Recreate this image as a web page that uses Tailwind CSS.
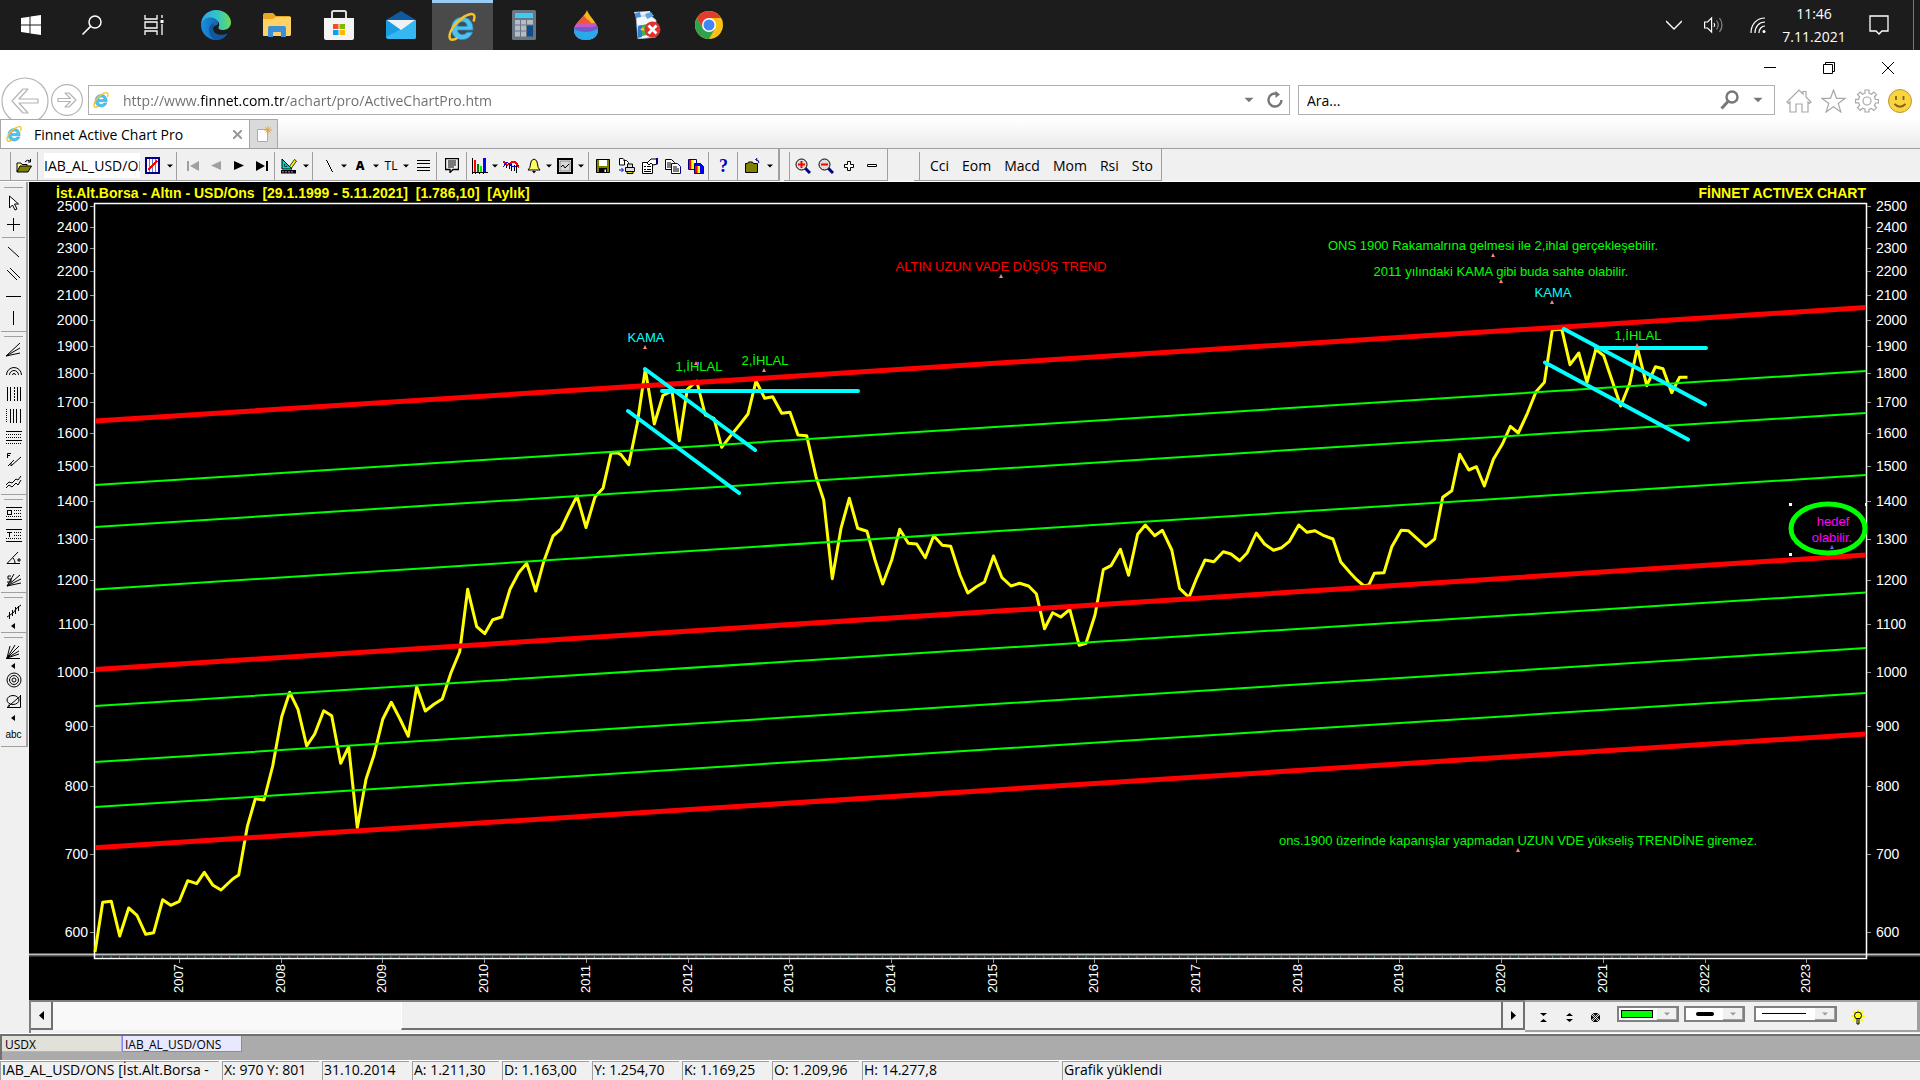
<!DOCTYPE html>
<html lang="tr">
<head>
    <meta charset="UTF-8">
    <meta name="viewport" content="width=device-width, initial-scale=1.0">
    <title>Finnet Active Chart Pro</title>
    <script src="https://cdn.jsdelivr.net/npm/@tailwindcss/browser@4"></script>
</head>
<body class="min-h-screen flex flex-col bg-[#f0f0f0] text-black font-['Open_Sans','Noto_Sans',sans-serif] overflow-hidden">

    <!-- Shared icons -->
    <svg class="hidden">
        <symbol id="ie" viewBox="0 0 32 32">
            <path d="M27 19H11.500c.3 3 2.300 4.600 5 4.600 2 0 3.600-.9 4.400-2.400h5.600C25 25.600 21.200 28.500 16.400 28.500 9.800 28.500 5.500 24 5.500 17.400 5.500 11 10 6.300 16.400 6.300 23.200 6.300 27.300 11.300 27 19zM11.600 15.300h9.600c-.2-2.800-2-4.600-4.700-4.600s-4.500 1.800-4.900 4.600z" fill="#4fc3f0" stroke="#1f8fd0" stroke-width=".7"/>
            <path d="M27.500 10.500C29.500 5.500 28.500 2.500 25 3 20 3.600 11 9.500 6.500 17 2.500 23.500 2.500 29 6.500 28.800c1.700 0 3.500-1 5-2" fill="none" stroke="#f6c32c" stroke-width="2.400"/>
        </symbol>
        <symbol id="caret" viewBox="0 0 6 4"><path d="M0 .5h6L3 3.500z"/></symbol>
        <symbol id="fly" viewBox="0 0 5 6"><path d="M4 0v6L0 3z"/></symbol>
    </svg>

    <!-- Taskbar -->
    <header class="h-[50px] flex items-stretch justify-between bg-[#1c1c1c] text-white">
        <nav class="grid grid-cols-12 w-[740px]">
            <button class="flex items-center justify-center" aria-label="Başlat">
                <svg class="w-5 h-5" viewBox="0 0 20 20" fill="#fff"><path d="M0 3l8.500-1.200v7.700H0zM9.500 1.600L20 0v9.500H9.500zM0 10.500h8.500v7.700L0 17zM9.500 10.500H20V20L9.500 18.400z"/></svg>
            </button>
            <button class="flex items-center justify-center" aria-label="Ara">
                <svg class="w-5 h-5" viewBox="0 0 20 20" fill="none" stroke="#fff" stroke-width="1.500"><circle cx="13" cy="7" r="6"/><path d="M8.600 11.400L.5 19.500"/></svg>
            </button>
            <button class="flex items-center justify-center" aria-label="Görev görünümü">
                <svg class="w-5 h-5" viewBox="0 0 20 20" fill="none" stroke="#fff" stroke-width="1.300"><path d="M1 0v4h12V0M1 20v-4h12v4M1 7h12v6H1zM18 0v3M18 9v11"/><path d="M16.500 5h3v3h-3z" fill="#fff" stroke="none"/></svg>
            </button>
            <button class="flex items-center justify-center" aria-label="Edge">
                <svg class="w-[30px] h-[30px]" viewBox="0 0 30 30">
                    <defs>
                        <linearGradient id="edgeTop" x1="0" x2="1"><stop offset="0" stop-color="#2aa7e8"/><stop offset=".6" stop-color="#37c7c0"/><stop offset="1" stop-color="#6fdc50"/></linearGradient>
                        <linearGradient id="edgeLow" x1="0" x2="1"><stop offset="0" stop-color="#1b8fdc"/><stop offset="1" stop-color="#0c4f9e"/></linearGradient>
                    </defs>
                    <path d="M0 15C0 6.500 6.500 0 15 0s15 6 15 12.500c0 4.500-3.500 7.500-8 7.500-3.500 0-5-1.500-4.500-2.800 1.500-2 1-7.200-4.500-7.200C7 10 0 12 0 15z" fill="url(#edgeTop)"/>
                    <path d="M0 15C1 9.500 6 7 10 7.500c5 .5 7.500 3.500 7 6.500-.2 1.500-6 1-5 6 .8 4 5 6 9 5.500 2-.2 4-1 5.500-2C24 28 20 30 15 30 6.500 30 0 23 0 15z" fill="url(#edgeLow)"/>
                    <path d="M10.500 14c-4 3.500-3.500 12 3.500 15.900 5 .3 9.500-2 12.500-6.400-7 3-14 .5-14.500-4.500-.2-2 .5-3.500 2-4.500-1-1.200-2.500-1.200-3.500-.5z" fill="#10589f"/>
                </svg>
            </button>
            <button class="flex items-center justify-center" aria-label="Dosya Gezgini">
                <svg class="w-7 h-6" viewBox="0 0 28 24"><path d="M0 2Q0 0 2 0h8l3 3h13q2 0 2 2v16q0 2-2 2H0z" fill="#e9a820"/><path d="M0 6h10l3-2h15v17q0 2-2 2H2q-2 0-2-2z" fill="#fdd367"/><path d="M5 24V15q0-2 2-2h14q2 0 2 2v9h-5v-4q0-1-1-1h-6q-1 0-1 1v4z" fill="#3a8fd6"/></svg>
            </button>
            <button class="flex items-center justify-center" aria-label="Mağaza">
                <svg class="w-[30px] h-[30px]" viewBox="0 0 30 30"><path d="M8 9V2.500Q8 1 9.500 1h11Q22 1 22 2.500V9" fill="none" stroke="#ddd" stroke-width="2"/><path d="M0 8h30v20q0 2-2 2H2q-2 0-2-2z" fill="#f4f4f4"/><path d="M9 14h5.500v5H9z" fill="#f25022"/><path d="M15.500 14H21v5h-5.500z" fill="#7fba00"/><path d="M9 20h5.500v5H9z" fill="#00a4ef"/><path d="M15.500 20H21v5h-5.500z" fill="#ffb900"/></svg>
            </button>
            <button class="flex items-center justify-center" aria-label="Posta">
                <svg class="w-[30px] h-7" viewBox="0 0 30 28"><path d="M0 9L15 0l15 9v6H0z" fill="#0f5a9e"/><path d="M0 9v17q0 2 2 2h26q2 0 2-2V9z" fill="#1b9de2"/><path d="M0 26L15 18l15-9v17q0 2-2 2H2z" fill="#35b8f1"/><path d="M1 9h28L15 19z" fill="#eef2f5"/></svg>
            </button>
            <button class="flex items-center justify-center bg-[#4a4a4a] border-t-[3px] border-[#99ccf5]" aria-label="Internet Explorer">
                <svg class="w-8 h-8"><use href="#ie"/></svg>
            </button>
            <button class="flex items-center justify-center" aria-label="Hesap Makinesi">
                <svg class="w-6 h-[30px]" viewBox="0 0 24 30"><rect width="24" height="30" rx="1.500" fill="#6b7683"/><path d="M3 3h18v5H3z" fill="#3ccbf4"/><path d="M3 10h5v4.500H3zM9 10h5v4.500H9zM15 10h6v4.500h-6zM3 15.500h5v5H3zM9 15.500h5v5H9zM3 21.500h5v5H3zM9 21.500h5v5H9z" fill="#b4bdc6"/><path d="M15 15.500h6v11h-6z" fill="#0e4d8c"/></svg>
            </button>
            <button class="flex items-center justify-center" aria-label="Paint 3D">
                <svg class="w-6 h-[30px]" viewBox="0 0 24 30"><defs><clipPath id="drop"><path d="M13 0c1 5 11 13 11 20 0 6-5 10-12 10S0 26 0 20C0 13 11 7 13 0z"/></clipPath></defs><g clip-path="url(#drop)"><path d="M0 0h24v30H0z" fill="#f8b81c"/><path d="M0 4h10c0 5 6 5 9 12L0 20z" fill="#f0543c"/><path d="M0 14c8-3 10 2 24-2v18H0z" fill="#c45ac0"/><path d="M0 18c9-3 14 2 24-3v15H0z" fill="#6e5bd0"/><path d="M0 19c8 4 15 4 24 0v11H0z" fill="#29a8ea"/></g></svg>
            </button>
            <button class="flex items-center justify-center" aria-label="Uygulama">
                <svg class="w-7 h-7" viewBox="0 0 28 28"><path d="M1 1l16-1 1 6-14 2z" fill="#e8f1fa"/><path d="M3 5h15l5 4v17L5 28z" fill="#f4f7fb" stroke="#9fb6cc" stroke-width=".8"/><path d="M2 2l5-1 1 5-5 1z" fill="#4a90d9"/><path d="M12 3l6-2 3 4-7 3z" fill="#5ea4e4"/><path d="M5 15l9-2v11l-9 2z" fill="#39b54a"/><path d="M5 15l4-1v12l-4 1z" fill="#2b7bd0"/><path d="M7 19l3-3 2 4z" fill="#f6c32c"/><circle cx="19.500" cy="18.500" r="8" fill="#e03030"/><path d="M15.500 14.500l8 8m0-8l-8 8" stroke="#fff" stroke-width="2.800"/></svg>
            </button>
            <button class="flex items-center justify-center" aria-label="Chrome">
                <svg class="w-7 h-7" viewBox="0 0 28 28"><circle cx="14" cy="14" r="14" fill="#fbc116"/><path d="M14 7h12.100A14 14 0 0 0 1.900 7L8 17.500z" fill="#e33b2e"/><path d="M1.900 7A14 14 0 0 0 14 28l6-10.500L14 20l-6-2.500z" fill="#2fa24c"/><circle cx="14" cy="14" r="7" fill="#fff"/><circle cx="14" cy="14" r="5.500" fill="#4285f4"/></svg>
            </button>
        </nav>
        <div class="flex items-center">
            <button class="w-10 flex justify-center" aria-label="Gizli simgeler"><svg class="w-4 h-4" viewBox="0 0 16 16" fill="none" stroke="#fff" stroke-width="1.400"><path d="M0 4l8 8 8-8"/></svg></button>
            <button class="w-10 flex justify-center" aria-label="Ses"><svg class="w-5 h-5" viewBox="0 0 20 20" fill="none" stroke="#fff" stroke-width="1.200"><path d="M.6 7h3l4-4v14l-4-4h-3zM10 8q1.500 2 0 4"/><path d="M12.500 5.500q3.500 4.500 0 9M15.500 3q5 7 0 14" stroke="#888"/></svg></button>
            <button class="w-10 flex justify-end pr-2" aria-label="Ağ"><svg class="w-4 h-4" viewBox="0 0 16 16" fill="none" stroke="#fff" stroke-width="1.200"><path d="M1 16C1 7 7 1 15 1M5 16C5 9.500 9 5 15 5M9 16c0-4 2.500-7 6-7"/><circle cx="14" cy="14.500" r="1.500" fill="#fff" stroke="none"/></svg></button>
            <button class="w-20 text-center text-sm leading-[23px]"><time>11:46<br>7.11.2021</time></button>
            <button class="w-[50px] flex justify-center" aria-label="Bildirimler"><svg class="w-5 h-5" viewBox="0 0 20 20" fill="none" stroke="#fff" stroke-width="1.300"><path d="M1 1h18v15h-6l-3 3-3-3H1z"/></svg></button>
            <span class="w-[10px] h-[50px] border-r border-[#777] mr-[6px]"></span>
        </div>
    </header>

    <!-- Window title bar -->
    <div class="h-[35px] flex justify-end items-center bg-white">
        <button class="w-[59px] flex justify-center" aria-label="Simge durumuna küçült"><svg class="w-3 h-3" viewBox="0 0 12 12"><path d="M0 5h12v1H0z"/></svg></button>
        <button class="w-[59px] flex justify-center" aria-label="Önceki boyut"><svg class="w-3 h-3" viewBox="0 0 12 12" fill="none" stroke="#000"><path d="M.5 2.500h9v9h-9zM2.500 2V.5h9v9H10"/></svg></button>
        <button class="w-[59px] flex justify-center mr-[3px]" aria-label="Kapat"><svg class="w-3 h-3" viewBox="0 0 12 12" fill="none" stroke="#000"><path d="M0 0l12 12M12 0L0 12"/></svg></button>
    </div>

    <!-- Address row -->
    <div class="h-[34px] flex items-start bg-white pr-2">
        <button class="w-[49px] shrink-0 -mt-2 flex justify-center" aria-label="Geri">
            <svg class="w-12 h-12 shrink-0" viewBox="0 0 48 48" fill="none" stroke="#b4b4b4" stroke-width="1.200"><circle cx="24" cy="24" r="23"/><path d="M11 24L22 12h5l-9 10h19v4H18l9 10h-5z" stroke-linejoin="round"/></svg>
        </button>
        <button class="w-9 shrink-0 flex justify-center" aria-label="İleri">
            <svg class="w-8 h-8 -mt-px" viewBox="0 0 32 32" fill="none" stroke="#b4b4b4" stroke-width="1.200"><circle cx="16" cy="16" r="15.400"/><path d="M25 16l-7-7h-4l5.500 5.500H7v3h12.500L14 23h4z" stroke-linejoin="round"/></svg>
        </button>
        <div class="h-[30px] flex-1 ml-[3px] flex items-center border border-[#b0b0b0] pl-[3px]">
            <svg class="w-[18px] h-[18px]"><use href="#ie"/></svg>
            <input type="text" aria-label="Adres" value="http://www.finnet.com.tr/achart/pro/ActiveChartPro.htm" class="flex-1 ml-[13px] pt-[2px] text-sm outline-none text-transparent bg-clip-text bg-[linear-gradient(90deg,#6d6d6d_78px,#000_78px,#000_161px,#6d6d6d_161px)]">
            <button class="w-6 flex justify-center" aria-label="Adres geçmişi"><svg class="w-[10px] h-[6px]" fill="#777"><use href="#caret"/></svg></button>
            <button class="w-7 flex justify-center" aria-label="Yenile"><svg class="w-[18px] h-[18px]" viewBox="0 0 18 18" fill="none" stroke="#777" stroke-width="2.400"><path d="M15.500 9a6.500 6.500 0 1 1-4-6"/><path d="M9.500 0L14 3.500 9.500 7z" fill="#777" stroke="none"/></svg></button>
        </div>
        <div class="h-[30px] w-[477px] ml-2 flex items-center border border-[#b0b0b0] pl-2">
            <input type="text" aria-label="Arama" placeholder="Ara..." class="flex-1 pt-[2px] text-sm outline-none placeholder:text-black">
            <button class="w-6 flex justify-center" aria-label="Ara"><svg class="w-5 h-5" viewBox="0 0 20 20" fill="none" stroke="#777"><circle cx="12" cy="7" r="5.500" stroke-width="2.400"/><path d="M8 11.500L1.500 18.500" stroke-width="3"/></svg></button>
            <button class="w-8 flex justify-center" aria-label="Arama seçenekleri"><svg class="w-[10px] h-[6px]" fill="#777"><use href="#caret"/></svg></button>
        </div>
        <div class="flex items-center h-8 ml-[11px] gap-[9px]">
            <button aria-label="Giriş"><svg class="block w-[26px] h-6" viewBox="0 0 26 24" fill="none" stroke="#a8a8a8" stroke-width="1.200"><path d="M1 13L13 1l4 4V2.500h3V8l5 5-1.500 1.500L22 13v10h-6v-8h-6v8H4V13l-1.500 1.500z"/></svg></button>
            <button aria-label="Sık kullanılanlar"><svg class="block w-[25px] h-6" viewBox="0 0 25 24" fill="none" stroke="#a8a8a8" stroke-width="1.200"><path d="M12.500 1l3 8.300h8.700l-7 5.200 2.700 8.500-7.400-5.200L5.100 23l2.700-8.500-7-5.200h8.700z"/></svg></button>
            <button aria-label="Araçlar"><svg class="block w-6 h-6" viewBox="0 0 24 24" fill="none" stroke="#a8a8a8" stroke-width="1.200"><path d="M10 1h4v3.200l2.500 1 2.300-2.200 2.700 2.700-2.100 2.300 1 2.500H23.400v3.500h-3l-1 2.500 2.100 2.300-2.700 2.700-2.300-2.100-2.500 1V23h-4v-2.800l-2.500-1-2.300 2.100-2.700-2.700 2.100-2.300-1-2.500H.6v-3.500h3l1-2.500-2.100-2.300L5.200 3l2.300 2.200 2.500-1z"/><circle cx="12" cy="12" r="4"/></svg></button>
            <button aria-label="Geri bildirim"><svg class="block w-6 h-6" viewBox="0 0 24 24"><circle cx="12" cy="12" r="11.500" fill="#fbd33c" stroke="#b59a3a"/><path d="M8 7v4M15.500 7v4M6.500 15q5.500 5.500 11 0" fill="none" stroke="#7a6420" stroke-width="1.800"/></svg></button>
        </div>
    </div>

    <!-- Tabs -->
    <div class="h-[30px] flex items-stretch bg-linear-to-b from-white to-[#ebebeb] border-b border-[#a0a0a0]">
        <div class="w-[250px] flex items-center bg-white border border-b-0 border-[#a8a8a8] pl-1">
            <svg class="w-[18px] h-[18px]"><use href="#ie"/></svg>
            <a href="#" class="flex-1 ml-[11px] pt-px text-sm">Finnet Active Chart Pro</a>
            <button class="w-6 flex justify-center" aria-label="Sekmeyi kapat"><svg class="w-[9px] h-[9px]" viewBox="0 0 9 9" stroke="#999" stroke-width="2"><path d="M0 0l9 9M9 0L0 9"/></svg></button>
        </div>
        <button class="w-7 flex items-center justify-center bg-[#dadada] border-t border-r border-[#a8a8a8]" aria-label="Yeni sekme">
            <svg class="w-4 h-4" viewBox="0 0 16 16"><path d="M1.500 3.500h10v12h-10z" fill="#fff" stroke="#aaa"/><path d="M12 0v8M8 4h8M9.500 1.500l5 5M14.500 1.500l-5 5" stroke="#e8a33a"/></svg>
        </button>
    </div>

    <!-- Chart toolbar -->
    <div class="h-[33px] flex items-stretch border-b border-white text-sm">
        <div class="flex items-center border-r-2 border-b border-[#a0a0a0] pl-[10px] pr-[3px] pt-[2px]">
            <span class="w-[2px] h-7 border-l border-[#a0a0a0]"></span>
            <button class="w-6 flex justify-center" aria-label="Aç"><svg class="w-4 h-[14px]" viewBox="0 0 16 14"><path d="M1 13V4h4l1 1.500h5V8" fill="#ffff9c" stroke="#000"/><path d="M1 13l3-6h11.500l-3.500 6z" fill="#808000" stroke="#000"/><path d="M9 3q2-3 5-1M14.500 0v3H12" fill="none" stroke="#000"/></svg></button>
            <span class="w-[2px] h-7 mx-px border-l border-[#a0a0a0]"></span>
            <input type="text" aria-label="Sembol" value="IAB_AL_USD/ONS" class="w-24 h-[25px] ml-1 bg-white outline-none text-sm">
            <button class="w-[25px] flex justify-center" aria-label="Grafik türü"><svg class="w-[15px] h-[17px]" viewBox="0 0 15 17" shape-rendering="crispEdges"><path d="M1 1h13v15H1z" fill="#fff" stroke="#00008b" stroke-width="2"/><path d="M4.500 2v13M7.500 2v13M10.500 2v13" stroke="#5a7de0"/><path d="M3 13l4-4 5-5" stroke="red" stroke-width="2" fill="none"/></svg></button>
            <button class="w-[10px] flex justify-center" aria-label="Grafik türü listesi"><svg class="w-[6px] h-1"><use href="#caret"/></svg></button>
            <span class="w-[2px] h-7 mx-px border-l border-[#a0a0a0]"></span>
            <button class="w-[23px] ml-[2px] flex justify-center" aria-label="İlk"><svg class="w-3 h-[10px]" viewBox="0 0 12 10" fill="#a0a0a0"><path d="M0 0h2v10H0zM12 0v10L3 5z"/></svg></button>
            <button class="w-[23px] flex justify-center" aria-label="Önceki"><svg class="w-[10px] h-[9px]" viewBox="0 0 10 9" fill="#a0a0a0"><path d="M10 0v9L0 4.500z"/></svg></button>
            <button class="w-[23px] flex justify-center" aria-label="Sonraki"><svg class="w-[10px] h-[9px]" viewBox="0 0 10 9"><path d="M0 0v9l10-4.500z"/></svg></button>
            <button class="w-[23px] flex justify-center" aria-label="Son"><svg class="w-3 h-[10px]" viewBox="0 0 12 10"><path d="M10 0h2v10h-2zM0 0v10l9-5z"/></svg></button>
            <span class="w-[2px] h-7 mx-px border-l border-[#a0a0a0]"></span>
            <button class="w-6 flex justify-center" aria-label="Çizim"><svg class="w-4 h-4" viewBox="0 0 16 16"><path d="M1 1v10h10z" fill="#00d8d8" stroke="#000"/><path d="M3.500 6v2.500H6z" fill="#fff" stroke="#000" stroke-width=".7"/><path d="M0 12h15v3.500H0z"/><path d="M2 13v1.500M5 13v1.500M8 13v1.500M11 13v1.500" stroke="#ccc"/><path d="M8.500 8.500l5-7 2 1.500-5 7z" fill="#ff0" stroke="#000" stroke-width=".8"/></svg></button>
            <button class="w-[10px] flex justify-center" aria-label="Çizim listesi"><svg class="w-[6px] h-1"><use href="#caret"/></svg></button>
            <span class="w-[2px] h-7 mx-px border-l border-[#a0a0a0]"></span>
            <button class="w-6 pl-1 flex justify-center" aria-label="Çizgi"><svg class="w-[7px] h-3" viewBox="0 0 7 12" stroke="#000" shape-rendering="crispEdges"><path d="M.5 0l6 12"/></svg></button>
            <button class="w-[10px] flex justify-center" aria-label="Çizgi listesi"><svg class="w-[6px] h-1"><use href="#caret"/></svg></button>
            <button class="w-[22px] text-xs font-extrabold">A</button>
            <button class="w-[10px] flex justify-center" aria-label="Yazı listesi"><svg class="w-[6px] h-1"><use href="#caret"/></svg></button>
            <button class="w-5 text-xs">TL</button>
            <button class="w-[10px] flex justify-center" aria-label="Para birimi listesi"><svg class="w-[6px] h-1"><use href="#caret"/></svg></button>
            <button class="w-6 flex justify-center" aria-label="Seviyeler"><svg class="w-[13px] h-[11px]" viewBox="0 0 13 11" stroke="#000" shape-rendering="crispEdges"><path d="M0 .5h13M0 3.500h13M0 7.500h13M0 10.500h13"/></svg></button>
            <span class="w-[2px] h-7 mx-px border-l border-[#a0a0a0]"></span>
            <button class="w-[26px] flex justify-center" aria-label="Not"><svg class="w-[14px] h-[15px]" viewBox="0 0 14 15" fill="none" stroke="#000"><path d="M.5.5h13v11H8L5 14.500v-3H.5z" stroke-width="1.300"/><path d="M3 3h8M3 5h8M3 7h8M3 9h6"/></svg></button>
            <span class="w-[2px] h-7 mx-px border-l border-[#a0a0a0]"></span>
            <button class="w-[22px] flex justify-center" aria-label="Göstergeler"><svg class="w-4 h-4" viewBox="0 0 16 16" shape-rendering="crispEdges"><path d="M.5 0v15.500M0 14.500h16M3.500 14v2M7.500 14v2M11.500 14v2" stroke="#000"/><path d="M2 2h2v12H2z" fill="red"/><path d="M5 6h2v8H5z" fill="#008000"/><path d="M8 8h2v6H8z" fill="#0e0"/><path d="M11 0h3v14h-3z" fill="#00f"/></svg></button>
            <button class="w-2 flex justify-center" aria-label="Gösterge listesi"><svg class="w-[6px] h-1"><use href="#caret"/></svg></button>
            <button class="w-6 flex justify-center" aria-label="Karşılaştır"><svg class="w-4 h-[14px]" viewBox="0 0 16 14" fill="none" shape-rendering="crispEdges"><path d="M1.500 2v5M3.500 3v6M6.500 5v5M8.500 3v9M11.500 6v6M13.500 6v8" stroke="#000"/><path d="M0 2q4 6 8 2t8 5" stroke="red" stroke-width="2"/><path d="M0 8l4-5 6 5 6-2" stroke="#00f"/></svg></button>
            <button class="w-[22px] flex justify-center" aria-label="Alarm"><svg class="w-[14px] h-4" viewBox="0 0 14 16"><path d="M7 1q3.500 1 3.500 5t2.500 6H1q2.500-2 2.500-6T7 1z" fill="#ffff60" stroke="#000"/><path d="M5 13h4l-2 2.500z"/></svg></button>
            <button class="w-2 flex justify-center" aria-label="Alarm listesi"><svg class="w-[6px] h-1"><use href="#caret"/></svg></button>
            <button class="w-6 flex justify-center" aria-label="Şablon"><svg class="w-4 h-4" viewBox="0 0 16 16" fill="none" stroke="#000"><path d="M1 1h14v14H1z" stroke-width="2"/><path d="M3 3h10v10H3z" fill="#d8d8d8" stroke="#888"/><path d="M4 9l2-2 2 3 4-4"/></svg></button>
            <button class="w-2 mr-[2px] flex justify-center" aria-label="Şablon listesi"><svg class="w-[6px] h-1"><use href="#caret"/></svg></button>
            <span class="w-[2px] h-7 mx-px border-l border-[#a0a0a0]"></span>
            <button class="w-6 flex justify-center" aria-label="Kaydet"><svg class="w-[14px] h-[14px]" viewBox="0 0 14 14"><path d="M.5.5h13v13H.5z" fill="#808000" stroke="#000"/><path d="M3 1h8v6H3z" fill="#fff"/><path d="M3 9h8v5H3z"/><path d="M8.500 10.500h1.500V13H8.500z" fill="#fff"/></svg></button>
            <button class="w-[23px] flex justify-center" aria-label="Yazdır"><svg class="w-4 h-4" viewBox="0 0 16 16" fill="#fff" stroke="#000"><path d="M.5.500h3.500l1.500 1.500v5h-5zM4.500 2.500h3l2 2v3"/><path d="M8.500 9V6h5v3M6.500 9.500h9v4h-9z" fill="#ddd"/><path d="M8 13.500h6v2H8z" fill="#dd0"/><path d="M0 12h4M2.500 10l2 2-2 2" fill="none" stroke="#00c"/></svg></button>
            <button class="w-[23px] flex justify-center" aria-label="Özellikler"><svg class="w-4 h-4" viewBox="0 0 16 16" fill="#fff" stroke="#000"><path d="M.5 4.500h10v11H.5z"/><path d="M2 8.500h2M5 8.500h4M2 11.500h2M5 11.500h4M2 13.500h7"/><path d="M5 5l4-4h5l1.500 2v3L11 7 9 5 7 7z"/><path d="M15 0v6" stroke="#00008b" stroke-width="2"/></svg></button>
            <button class="w-[23px] flex justify-center" aria-label="Kopyala"><svg class="w-4 h-4" viewBox="0 0 16 16" fill="#fff" stroke="#000"><path d="M.5 1.500h6l3 3v7h-9z"/><path d="M2 5h4M2 7h4M2 9h4"/><path d="M6.500 5.500h6l3 3v7h-9z" stroke="#000080"/><path d="M8 9h4M8 11h6M8 13h6"/></svg></button>
            <button class="w-[23px] flex justify-center" aria-label="Renkli kopyala"><svg class="w-4 h-4" viewBox="0 0 16 16" stroke="#000080"><path d="M.5 1.500h8v10h-8z" fill="#fff"/><path d="M1 2h2.500v9H1z" fill="red" stroke="none"/><path d="M3.500 2H6v9H3.500z" fill="#ff0" stroke="none"/><path d="M6.500 5.500h6l3 3v7h-9z" fill="#00f"/><path d="M7 8h2.500v7H7z" fill="red" stroke="none"/><path d="M9.500 8H12v7H9.500z" fill="#ff0" stroke="none"/></svg></button>
            <span class="w-[2px] h-7 mx-px border-l border-[#a0a0a0]"></span>
            <button class="w-[25px] text-lg leading-none font-bold text-[#0000b8] font-['Liberation_Serif',serif]" aria-label="Yardım">?</button>
            <span class="w-[2px] h-7 mx-px border-l border-[#a0a0a0]"></span>
            <button class="w-[25px] flex justify-center" aria-label="Klasör"><svg class="w-[15px] h-[15px]" viewBox="0 0 15 15"><path d="M.5 14.500v-9h2l1-1.500h4l1 1.500h4v9z" fill="#808000" stroke="#000"/><path d="M14 5q0-3-3-3.500M12.500 0l-2 1.500 2 1.500" fill="none" stroke="#00008b"/></svg></button>
            <button class="w-[10px] flex justify-center" aria-label="Klasör listesi"><svg class="w-[6px] h-1"><use href="#caret"/></svg></button>
        </div>
        <div class="ml-1 flex items-center border-r border-b border-[#a0a0a0] pl-[5px] pr-1 pt-[2px]">
            <span class="w-[2px] h-7 border-l border-[#a0a0a0]"></span>
            <button class="w-[23px] flex justify-center" aria-label="Yakınlaştır"><svg class="w-4 h-4" viewBox="0 0 16 16"><path d="M10 10l5 5" stroke="#00008b" stroke-width="3"/><circle cx="6.500" cy="6.500" r="5.500" fill="#ddd" stroke="#000"/><path d="M3 6.500h7M6.500 3v7" stroke="red" stroke-width="2"/></svg></button>
            <button class="w-[23px] flex justify-center" aria-label="Uzaklaştır"><svg class="w-4 h-4" viewBox="0 0 16 16"><path d="M10 10l5 5" stroke="#00008b" stroke-width="3"/><circle cx="6.500" cy="6.500" r="5.500" fill="#ddd" stroke="#000"/><path d="M3 6.500h7" stroke="red" stroke-width="2"/></svg></button>
            <button class="w-[23px] flex justify-center" aria-label="Artır"><svg class="w-[10px] h-[10px]" viewBox="0 0 10 10" fill="#fff" stroke="#000"><path d="M3.500.5h3v3h3v3h-3v3h-3v-3h-3v-3h3z"/></svg></button>
            <button class="w-[23px] flex justify-center" aria-label="Azalt"><svg class="w-[10px] h-[3px]" viewBox="0 0 10 3" fill="#fff" stroke="#000"><path d="M.5.5h9v2h-9z"/></svg></button>
        </div>
        <div class="ml-[26px] flex items-center border-r border-b border-[#a0a0a0] pl-[5px] pr-2 pt-[2px] gap-[13px]">
            <span class="w-[2px] h-7 -mr-1 border-l border-[#a0a0a0]"></span>
            <button>Cci</button>
            <button>Eom</button>
            <button>Macd</button>
            <button>Mom</button>
            <button>Rsi</button>
            <button>Sto</button>
        </div>
    </div>

    <main class="flex items-stretch">
        <!-- Drawing tools -->
        <aside class="w-[29px] shrink-0 pl-px">
            <div class="w-[27px] h-[150px] flex flex-col items-center border-b border-r-2 border-[#a0a0a0]">
                <div class="w-full h-[10px] px-[3px] pt-[5px]"><hr class="border-[#a0a0a0]"></div>
                <button class="h-[22px]" aria-label="Seç"><svg class="w-4 h-4" viewBox="0 0 16 16" fill="#fff" stroke="#000"><path d="M3.500 1v12l3-3 2.500 5 2-1-2.500-5h4z"/></svg></button>
                <button class="h-[22px]" aria-label="Artı imleç"><svg class="w-4 h-4" viewBox="0 0 16 16" stroke="#000" shape-rendering="crispEdges"><path d="M1 7.500h13M7.500 1v13"/></svg></button>
                <div class="w-full h-[5px] px-px pt-[1px]"><hr class="border-[#a0a0a0]"></div>
                <button class="h-[22px]" aria-label="Trend çizgisi"><svg class="w-4 h-4" viewBox="0 0 16 16" stroke="#000"><path d="M2 3l11 10"/></svg></button>
                <button class="h-[22px]" aria-label="Paralel çizgi"><svg class="w-4 h-4" viewBox="0 0 16 16" stroke="#000"><path d="M1 4l10 10M4 2l10 10"/></svg></button>
                <button class="h-[22px]" aria-label="Yatay çizgi"><svg class="w-4 h-4" viewBox="0 0 16 16" stroke="#000" shape-rendering="crispEdges"><path d="M0 8.500h15"/></svg></button>
                <button class="h-[22px]" aria-label="Dikey çizgi"><svg class="w-4 h-4" viewBox="0 0 16 16" stroke="#000" shape-rendering="crispEdges"><path d="M7.500 1v14"/></svg></button>
            </div>
            <div class="w-[27px] h-[163px] flex flex-col items-center border-b border-r-2 border-[#a0a0a0]">
                <div class="w-full h-[7px] px-[3px] pt-[4px]"><hr class="border-[#a0a0a0]"></div>
                <button class="h-[22px]" aria-label="Fan"><svg class="w-4 h-4" viewBox="0 0 16 16" stroke="#000"><path d="M0 14L14 1M0 14L14 6M0 14l14-3"/></svg></button>
                <button class="h-[22px]" aria-label="Yaylar"><svg class="w-4 h-4" viewBox="0 0 16 16" fill="none" stroke="#000"><path d="M.5 11a7.500 7.500 0 0 1 15 0M3.500 11a4.500 4.500 0 0 1 9 0M6.500 11a1.500 1.500 0 0 1 3 0"/></svg></button>
                <button class="h-[22px]" aria-label="Döngü"><svg class="w-4 h-4" viewBox="0 0 16 16" stroke="#000" shape-rendering="crispEdges"><path d="M1.500 1v14M4.500 1v14M11.500 1v14M14.500 1v14"/><path d="M8.500 1v14" stroke-dasharray="2 1"/></svg></button>
                <button class="h-[22px]" aria-label="Zaman bölgeleri"><svg class="w-4 h-4" viewBox="0 0 16 16" stroke="#000" shape-rendering="crispEdges"><path d="M.5 1v14" stroke-dasharray="1 1"/><path d="M4.500 1v14M7.500 1v14M10.500 1v14M14.500 1v14"/></svg></button>
                <button class="h-[22px]" aria-label="Geri çekilme"><svg class="w-4 h-4" viewBox="0 0 16 16" stroke="#000" shape-rendering="crispEdges"><path d="M0 1.500h16M0 10.500h16"/><path d="M0 4.500h16M0 7.500h16M0 13.500h16" stroke-dasharray="1 1"/></svg></button>
                <button class="h-[22px]" aria-label="Fibonacci"><svg class="w-4 h-4" viewBox="0 0 16 16" fill="none" stroke="#000"><path d="M1.500 6V1.500H5M1.500 3.500H4M2 14l6-6M5 14l10-9M5 14v-3"/></svg></button>
                <button class="h-[22px]" aria-label="Regresyon"><svg class="w-4 h-4" viewBox="0 0 16 16" fill="none" stroke="#000"><path d="M0 11l3-3 3 1 4-4 2 1 3-4M0 14l3-3 3 2 4-4 2 2 3-5"/></svg></button>
            </div>
            <div class="w-[27px] h-[98px] flex flex-col items-center border-b border-r-2 border-[#a0a0a0]">
                <div class="w-full h-[8px] px-[3px] pt-[4px]"><hr class="border-[#a0a0a0]"></div>
                <button class="h-[22px]" aria-label="Quadrant"><svg class="w-4 h-4" viewBox="0 0 16 16" fill="none" stroke="#000" shape-rendering="crispEdges"><path d="M0 1.500h16M0 13.500h16M1.500 4.500h4v4h-4zM5 8l1 1"/><path d="M8 4.500h8M8 7.500h8M0 10.500h16" stroke-dasharray="1 1"/></svg></button>
                <button class="h-[22px]" aria-label="Tirone"><svg class="w-4 h-4" viewBox="0 0 16 16" fill="none" stroke="#000" shape-rendering="crispEdges"><path d="M0 1.500h16M0 13.500h16M1 4.500h5M3.500 4v5"/><path d="M8 4.500h8M8 7.500h8M0 10.500h16" stroke-dasharray="1 1"/></svg></button>
                <button class="h-[22px]" aria-label="Açı"><svg class="w-4 h-4" viewBox="0 0 16 16" fill="none" stroke="#000"><path d="M12 2L1 13.500h13M7 8q2 2 2 5"/><path d="M12 9h2v2h-2z"/></svg></button>
                <button class="h-[22px]" aria-label="Gann"><svg class="w-4 h-4" viewBox="0 0 16 16" fill="none" stroke="#000"><path d="M1 14L8 2M1 14L14 3M1 14l14-7M1 14l14-3M5 4H2v3h3v3H1"/></svg></button>
            </div>
            <div class="w-[27px] h-10 flex flex-col items-center border-b border-r-2 border-[#a0a0a0]">
                <div class="w-full h-[8px] px-[3px] pt-[4px]"><hr class="border-[#a0a0a0]"></div>
                <button class="h-[22px]" aria-label="Kanal"><svg class="w-4 h-4" viewBox="0 0 16 16" fill="none" stroke="#000"><path d="M1 13l3-2 3-2 4-5 4-3M3.500 8v7M6.500 6v6M9.500 3v7M12.500 2v5"/></svg></button>
                <svg class="w-[5px] h-[6px]"><use href="#fly"/></svg>
            </div>
            <div class="w-[27px] h-[114px] flex flex-col items-center border-b border-r-2 border-[#a0a0a0]">
                <div class="w-full h-[8px] px-[3px] pt-[4px]"><hr class="border-[#a0a0a0]"></div>
                <button class="h-[22px]" aria-label="Hız çizgileri"><svg class="w-4 h-4" viewBox="0 0 16 16" fill="none" stroke="#000"><path d="M0 14.500h14M1 14L4 2M1 14L9 1M1 14L13 2M1 14l12-7M1 14l12-4"/></svg></button>
                <svg class="w-[5px] h-[6px]"><use href="#fly"/></svg>
                <button class="h-[22px]" aria-label="Spiral"><svg class="w-4 h-4" viewBox="0 0 16 16" fill="none" stroke="#000"><circle cx="8" cy="8" r="7"/><circle cx="8" cy="8" r="4.500"/><circle cx="8" cy="8" r="2"/></svg></button>
                <button class="h-[22px]" aria-label="Şekiller"><svg class="w-4 h-4" viewBox="0 0 16 16" fill="none" stroke="#000"><path d="M14.500 1v12.500H1L14.500 2M3 13.500v-3"/><ellipse cx="7" cy="6" rx="6" ry="4.500"/></svg></button>
                <svg class="w-[5px] h-[6px] mt-[2px]"><use href="#fly"/></svg>
                <button class="h-[22px] mt-[2px] text-[10px] font-['Liberation_Sans',sans-serif]">abc</button>
            </div>
        </aside>

        <!-- Chart -->
        <svg class="block flex-1 min-w-0 bg-black font-['Liberation_Sans',sans-serif]" viewBox="29 182 1891 818">
            <g class="text-sm font-bold" fill="#ff0">
                <text x="56" y="198" xml:space="preserve">İst.Alt.Borsa - Altın - USD/Ons  [29.1.1999 - 5.11.2021]  [1.786,10]  [Aylık]</text>
                <text x="1866" y="198" text-anchor="end">FİNNET ACTIVEX CHART</text>
            </g>
            <path d="M29 954.500H1920" stroke="#c0c0c0" stroke-width="2"/>
            <path d="M29 956H1920" stroke="#606060"/>
            <path d="M94.500 958.500V203.500H1866.500V958.500z" fill="none" stroke="#fff" stroke-width="1.500"/>
            <path d="M102 957H1690" stroke="#5ff" stroke-width="1" stroke-dasharray="1 7.480"/>
            <g id="axes" class="text-sm" fill="#fff"></g>

            <!-- Monthly close -->
            <polyline fill="none" stroke="#ff0" stroke-width="3" stroke-linejoin="round" points="95,952 102.700,902.300 111.300,901.300 119.700,936 128.700,908 137,915.300 145.700,934.300 153.700,932.700 162.700,899.700 170.700,905.300 179.300,901.300 187.700,880.700 196.700,883.700 204.300,872.300 213,885.300 221,890 232.700,879 238.700,875 247.300,826.700 255.300,798.700 264,800 272.700,766 281.700,716.700 289.700,692.300 298,709.300 306.700,746 314.700,734 323.700,710.700 331.700,715.700 340.700,763.300 348.700,746.700 357.300,827.700 366,779.300 374,755 382.700,719.300 391.300,702.300 400,719 408.300,736.300 416.700,686.700 425.300,711 434,704.300 442.300,699 451,672.700 459.700,651.700 467.700,589.300 476.700,626.700 484.700,633.700 492.700,619.700 501.700,617 510,589.300 518.700,572.700 526.700,563.300 535.700,591 543.700,561.700 553,536 561,529 569,512 577,496 586,527.500 595,497 603,488.300 611,453.300 617,452.700 621,454.700 628.700,464.700 637.300,423.300 645.300,369.300 654.300,424 663,395.300 672,391 679.300,440.700 687.300,389.300 696.700,381 705.300,415 714,418.300 721.700,447.300 730,436.700 740,424.300 748,414 756,381 764.700,398.300 772.700,396.700 781.700,413.300 790,412.300 798,435 806.700,435.700 816,476.700 823.700,500 832.300,578.700 841,528.300 849.300,498.300 857.700,528.300 867,531.300 875,560 882.700,584 891.700,560 899.700,529.300 908.300,543.300 916.700,544 925.300,557.700 933.700,535.700 942.300,545.300 950.700,546.300 960,575 967.800,593 976.300,586.700 984.500,582 993.500,556 1002,577.700 1011,586 1019.600,583.300 1028.600,586 1036.300,593.700 1044.500,628.700 1052.700,612.700 1060.800,617 1069.800,609.300 1079.200,645.300 1086,643.300 1095,615 1103.300,569.700 1111,565.700 1120.400,549.300 1128.600,575.300 1137.600,534.300 1145.300,525 1154.700,535.700 1162.400,530.300 1171.800,550 1179.600,588.300 1189,597.300 1197,577.300 1205,560 1213.900,561.700 1223.300,551.700 1231,554 1239.600,560.700 1247.300,552.700 1256.300,533 1264.500,544 1273.500,550.300 1281.600,547.700 1289.400,541.300 1298.800,525 1307,532.300 1315,530.700 1324,535.700 1333,539 1340.800,562 1350.600,573.300 1356.700,579.700 1364,586 1369,584.700 1374.300,573.300 1384,572.700 1391.800,546.700 1401.200,530.300 1408.200,530.700 1425.700,546.300 1434.700,539 1442.700,497.300 1451.800,490.700 1459.700,454.300 1468.800,470 1476.400,466.700 1484.300,486 1493.400,459.300 1502.400,444 1510.400,426.300 1518.300,433 1527.400,413.300 1536,391.700 1544.400,382.300 1552.300,330 1561.800,329.300 1570,364.700 1578.800,353 1587,382.300 1595.800,349.300 1603.700,355.700 1620.700,406 1629.800,383.300 1637.300,347.700 1646.800,385.700 1655.500,366.700 1663,368.700 1671.700,392.700 1679.600,377.300 1687.500,377.300"/>

            <!-- Channel lines -->
            <path d="M95 485L1866 371M95 527L1866 413M95 589.500L1866 475M95 706L1866 592.500M95 762L1866 648M95 807L1866 693" stroke="#0f0" stroke-width="2"/>
            <path d="M95 421L1866 307.500M95 669.500L1866 555M95 847.700L1866 734" stroke="red" stroke-width="5"/>
            <path d="M645 369L755 450M628 411L739 493M662 391H858M1564 329L1705 404.500M1545 362.500L1688 439.500M1596 348H1706" stroke="#0ff" stroke-width="4" stroke-linecap="round"/>

            <!-- Target -->
            <ellipse cx="1828" cy="528.500" rx="37" ry="24.500" fill="none" stroke="#0f0" stroke-width="5"/>
            <path d="M1789 503h3v3h-3zM1865 503h2v3h-2zM1789 553h3v3h-3z" fill="#fff"/>
            <g class="text-[13px]" fill="#f0f" text-anchor="middle">
                <text x="1833" y="526">hedef</text>
                <text x="1832" y="542">olabilir.</text>
            </g>

            <!-- Notes -->
            <g id="notes" class="text-[13px]" text-anchor="middle">
                <g fill="#0ff">
                    <text x="646" y="342">KAMA</text>
                    <text x="1553" y="297">KAMA</text>
                </g>
                <g fill="#0f0">
                    <text x="699" y="371">1,İHLAL</text>
                    <text x="765" y="365">2,İHLAL</text>
                    <text x="1638" y="340">1,İHLAL</text>
                    <text x="1493" y="250">ONS 1900 Rakamalrına gelmesi ile 2,ihlal gerçekleşebilir.</text>
                    <text x="1501" y="276">2011 yılındaki KAMA gibi buda sahte olabilir.</text>
                    <text x="1518" y="845">ons.1900 üzerinde kapanışlar yapmadan UZUN VDE yükseliş TRENDİNE giremez.</text>
                </g>
                <text x="1001" y="271" fill="red">ALTIN UZUN VADE DÜŞÜŞ TREND</text>
            </g>
            <path d="M645 345l2 4h-4zM696 361l2 4h-4zM764 368l2 4h-4zM1493 253l2 4h-4zM1501 279l2 4h-4zM1552 300l2 4h-4zM1637 343l2 4h-4zM1001 274l2 4h-4zM1518 848l2 4h-4z" fill="#ff8080"/>
            <path d="M1832 545l2 4h-4zM697 362h2v3h-2z" fill="#6060ff"/>
        </svg>
    </main>

    <!-- Scroll bar and line style -->
    <div class="h-[34px] flex items-stretch pl-[29px] border-b border-white">
        <div class="flex-1 flex items-stretch border-t-2 border-l-2 border-[#808080] pb-[3px]">
            <button class="w-[22px] flex items-center justify-center bg-[#f0f0f0] border-r-2 border-b-2 border-[#707070]" aria-label="Sola kaydır"><svg class="w-[5px] h-[9px]" viewBox="0 0 5 9"><path d="M5 0v9L0 4.500z"/></svg></button>
            <div class="w-[348px] bg-[#f9f9f9]"></div>
            <div class="flex-1 bg-[#f0f0f0] border-l border-l-white border-r-2 border-b-2 border-[#707070]"></div>
            <button class="w-[22px] flex items-center justify-center bg-[#f0f0f0] border-r-2 border-b-2 border-[#707070]" aria-label="Sağa kaydır"><svg class="w-[5px] h-[9px]" viewBox="0 0 5 9"><path d="M0 0v9l5-4.500z"/></svg></button>
        </div>
        <div class="w-[395px] flex items-start pt-[4px] pl-[5px] border-t-2 border-r-[3px] border-b-2 border-[#a0a0a0] mb-px">
            <button class="w-[26px] h-[22px] flex items-center justify-center" aria-label="Daralt"><svg class="w-[7px] h-[9px]" viewBox="0 0 7 9"><path d="M0 0h7L3.500 3zM0 9h7L3.500 6z"/></svg></button>
            <button class="w-[26px] h-[22px] flex items-center justify-center" aria-label="Genişlet"><svg class="w-[7px] h-[9px]" viewBox="0 0 7 9"><path d="M0 3h7L3.500 0zM0 6h7L3.500 9z"/></svg></button>
            <button class="w-[26px] h-[22px] flex items-center justify-center" aria-label="Sığdır"><svg class="w-[9px] h-[9px]" viewBox="0 0 10 10"><path d="M2 0h6L5 3.500zM2 10h6L5 6.500zM0 2v6l3.500-3zM10 2v6L6.500 5z"/><path d="M1 1l8 8M9 1L1 9" stroke="#000"/></svg></button>
            <div class="relative ml-[9px]">
                <select aria-label="Renk" class="block w-[62px] h-4 appearance-none bg-white border-2 border-[#808080] text-transparent text-[8px]"><option>Yeşil</option></select>
                <span class="absolute left-1 top-1 w-8 h-2 bg-[#0f0] border border-black pointer-events-none"></span>
                <span class="absolute right-[2px] top-[2px] w-5 h-3 bg-[#f0f0f0] border-r border-b border-[#a0a0a0] flex items-center justify-center pointer-events-none"><svg class="w-[6px] h-1" fill="#999"><use href="#caret"/></svg></span>
            </div>
            <div class="relative ml-[5px]">
                <select aria-label="Kalınlık" class="block w-[61px] h-4 appearance-none bg-white border-2 border-[#808080] text-transparent text-[8px]"><option>5</option></select>
                <span class="absolute left-3 top-[6px] w-[18px] h-1 rounded-sm bg-black pointer-events-none"></span>
                <span class="absolute right-[2px] top-[2px] w-5 h-3 bg-[#f0f0f0] border-r border-b border-[#a0a0a0] flex items-center justify-center pointer-events-none"><svg class="w-[6px] h-1" fill="#999"><use href="#caret"/></svg></span>
            </div>
            <div class="relative ml-[9px]">
                <select aria-label="Çizgi stili" class="block w-[83px] h-4 appearance-none bg-white border-2 border-[#808080] text-transparent text-[8px]"><option>Düz</option></select>
                <span class="absolute left-2 top-[7px] w-[44px] h-px bg-black pointer-events-none"></span>
                <span class="absolute right-[2px] top-[2px] w-5 h-3 bg-[#f0f0f0] border-r border-b border-[#a0a0a0] flex items-center justify-center pointer-events-none"><svg class="w-[6px] h-1" fill="#999"><use href="#caret"/></svg></span>
            </div>
            <button class="w-[42px] h-[22px] flex items-center justify-center" aria-label="İpucu"><svg class="w-[14px] h-4" viewBox="0 0 14 16"><path d="M7 0v14M0 7h14M2 2l10 10M12 2L2 12" stroke="#ff0" stroke-width="2"/><circle cx="7" cy="6.500" r="3.500" fill="#ff0" stroke="#000"/><path d="M6 9.500h2V15H6z" fill="#ff0" stroke="#000"/></svg></button>
        </div>
    </div>

    <!-- Symbol tabs -->
    <nav class="h-[26px] flex items-start bg-[#ababab] border-t-2 border-l-2 border-[#707070] text-xs leading-[17px]">
        <a href="#" class="w-[120px] h-4 bg-[#e1e1da] border-b border-r border-[#b8b89c] pl-[3px]">USDX</a>
        <a href="#" class="w-[120px] h-4 bg-[#e8e8ff] border border-t-0 border-[#8080ff] pl-[2px]">IAB_AL_USD/ONS</a>
    </nav>

    <!-- Status bar -->
    <footer class="h-5 flex items-stretch gap-[3px] border-t border-white text-sm leading-4 whitespace-nowrap">
        <div class="w-[219px] border-t border-l border-[#a0a0a0] pl-px">IAB_AL_USD/ONS [İst.Alt.Borsa -</div>
        <div class="w-[97px] border-t border-l border-[#a0a0a0] pl-px">X: 970 Y: 801</div>
        <div class="w-[87px] border-t border-l border-[#a0a0a0] pl-px">31.10.2014</div>
        <div class="w-[87px] border-t border-l border-[#a0a0a0] pl-px">A: 1.211,30</div>
        <div class="w-[87px] border-t border-l border-[#a0a0a0] pl-px">D: 1.163,00</div>
        <div class="w-[87px] border-t border-l border-[#a0a0a0] pl-px">Y: 1.254,70</div>
        <div class="w-[87px] border-t border-l border-[#a0a0a0] pl-px">K: 1.169,25</div>
        <div class="w-[87px] border-t border-l border-[#a0a0a0] pl-px">O: 1.209,96</div>
        <div class="w-[197px] border-t border-l border-[#a0a0a0] pl-px">H: 14.277,8</div>
        <div class="flex-1 border-t border-l border-[#a0a0a0] pl-px">Grafik yüklendi</div>
    </footer>

    <script>
        const axes = document.getElementById("axes");

        // Log price scale, both sides
        for (let price = 600; price <= 2500; price += 100) {
            const y = Math.round(206 + 509 * Math.log(2500 / price));
            axes.innerHTML += `
                <path d="M90 ${y}.5h4M1867 ${y}.5h4" stroke="#999"/>
                <text x="88" y="${y + 5}" text-anchor="end">${price}</text>
                <text x="1876" y="${y + 5}">${price}</text>`;
        }

        // Years
        for (let year = 2007; year <= 2023; year++) {
            const x = Math.round(179 + (year - 2007) * 101.7);
            axes.innerHTML += `
                <path d="M${x}.5 959v4" stroke="#999"/>
                <text transform="translate(${x + 4} 993) rotate(-90)" font-size="13">${year}</text>`;
        }
    </script>
</body>
</html>
